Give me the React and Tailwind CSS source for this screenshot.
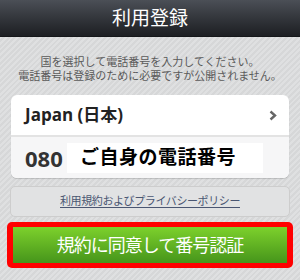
import React from 'react';

export default function App() {
  return (
    <div className="w-[300px] h-[280px] overflow-hidden flex flex-col bg-[repeating-linear-gradient(135deg,#d6d7d8_0_2px,#dfe0e1_2px_4px)] font-['Open_Sans','Noto_Sans_CJK_JP',sans-serif]">
      <div className="h-[37px] shrink-0 flex items-center justify-center bg-gradient-to-b from-[#4b4f56] to-[#1d1f23] border-b border-[#15171a]">
        <span className="text-white text-[19px] leading-none">利用登録</span>
      </div>

      <div className="flex flex-col items-center pt-[18px] text-[11px] leading-[14px] text-[#5a5a5a]">
        <p>国を選択して電話番号を入力してください。</p>
        <p>電話番号は登録のために必要ですが公開されません。</p>
      </div>

      <div className="mx-[11px] mt-[12px] h-[83px] rounded-[6px] bg-white shadow-[0_1px_1px_rgba(0,0,0,0.15)] flex flex-col overflow-hidden">
        <div className="h-[42px] flex items-center justify-between pl-[14px] pr-[12px] border-b-[2px] border-[#e3e3e3]">
          <span className="text-[17px] font-bold text-[#222]">Japan (日本)</span>
          <svg width="8" height="11" viewBox="0 0 8 11" className="text-[#666]">
            <path d="M1.5 1.5 L6 5.5 L1.5 9.5" fill="none" stroke="currentColor" strokeWidth="2.4" />
          </svg>
        </div>
        <div className="flex-1 flex items-center pl-[14px] bg-[#f6f6f7]">
          <span className="text-[22px] font-bold text-[#333] w-[42px] leading-none">080</span>
          <div className="w-[196px] h-[30px] bg-white flex items-center pl-[13px]">
            <span className="text-[19px] font-bold text-black tracking-[0.5px]">ご自身の電話番号</span>
          </div>
        </div>
      </div>

      <div className="mx-[10px] mt-[8px] h-[31px] rounded-[5px] border border-[#cdcdcd] bg-[#e1e2e3] flex items-center justify-center">
        <span className="text-[11px] tracking-[-0.4px] text-[#4a5672] underline underline-offset-2">利用規約およびプライバシーポリシー</span>
      </div>

      <div className="mx-[7px] mt-[5px] h-[46px] rounded-[5px] bg-[#ff0000] p-[5px_6px]">
        <div className="h-full bg-gradient-to-b from-[#7dd12c] to-[#46951b] flex items-center justify-center">
          <span className="text-white text-[18px] leading-none tracking-[-1px]">規約に同意して番号認証</span>
        </div>
      </div>
    </div>
  );
}
